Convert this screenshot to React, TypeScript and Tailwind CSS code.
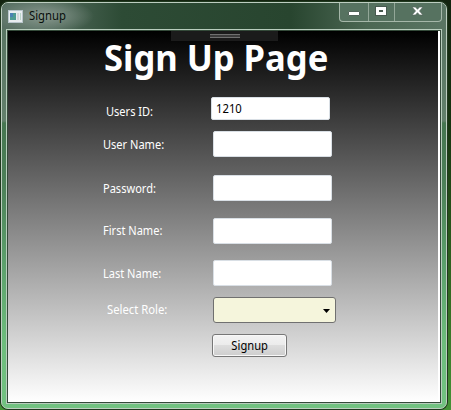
import React from "react";

type Field = { label: string; value: string; row: string; text: string; box: string };

const fields: Field[] = [
  { label: "Users ID:", value: "1210", row: "mt-[13px] h-[23px] pl-[98px]", text: "w-[105px] pt-[7px]", box: "w-[119px]" },
  { label: "User Name:", value: "", row: "mt-[11px] h-[26px] pl-[95px]", text: "w-[110px] pt-[6px]", box: "w-[119px]" },
  { label: "Password:", value: "", row: "mt-[18px] h-[26px] pl-[95px]", text: "w-[110px] pt-[6px]", box: "w-[119px]" },
  { label: "First Name:", value: "", row: "mt-[17px] h-[26px] pl-[95px]", text: "w-[110px] pt-[5px]", box: "w-[119px]" },
  { label: "Last Name:", value: "", row: "mt-[16px] h-[26px] pl-[95px]", text: "w-[110px] pt-[6px]", box: "w-[119px]" },
];

function TitleBar() {
  return (
    <div className="flex h-[26px] items-start justify-between">
      <div className="flex h-[26px] w-[110px] items-center bg-[radial-gradient(ellipse_50px_18px_at_42px_13px,#8a9a90_0%,#7d8f84b0_45%,#72877900_100%)] pl-[6px]">
        <svg width="15" height="13" viewBox="0 0 15 13" shapeRendering="crispEdges">
          <rect width="15" height="13" fill="#e9edf0" />
          <rect x="0.5" y="0.5" width="14" height="12" fill="none" stroke="#b9c6cc" />
          <rect x="2" y="3" width="6" height="7" fill="#4f9b93" />
          <rect x="2" y="3" width="3" height="4" fill="#4b82b4" />
          <rect x="9" y="3" width="2" height="7" fill="#d3d7da" />
          <rect x="12" y="3" width="1" height="7" fill="#b9d4c9" />
        </svg>
        <span className="ml-[6px] origin-left scale-x-[0.94] text-[12px] leading-[16px] text-[#080f0b]">Signup</span>
      </div>
      <div className="mr-[4px] flex h-[19px] w-[103px] rounded-b-[4px] border border-t-0 border-[#a5b7a9] bg-[#567260]">
        <div className="w-[29px] border-r border-[#93a798]">
          <svg width="28" height="18"><rect x="8.5" y="8.5" width="11" height="4" rx=".5" fill="#fff" stroke="#53645b" /></svg>
        </div>
        <div className="w-[26px] border-r border-[#93a798]">
          <svg width="25" height="18" shapeRendering="crispEdges"><rect x="6" y="3" width="12" height="10" fill="#485a50" /><path d="M7 4h10v8H7z M10 7v2h4V7z" fill="#fff" fillRule="evenodd" /></svg>
        </div>
        <div className="flex-1">
          <svg width="46" height="18"><path d="M17 4h3.5l2 2.3L24.500 4H28l-3.500 4 3.500 4h-3.500l-2-2.300-2 2.300H17l3.500-4z" fill="#fff" stroke="#53645b" strokeWidth=".7" /></svg>
        </div>
      </div>
    </div>
  );
}

export default function App() {
  return (
    <div className="h-[410px] w-[451px] overflow-hidden bg-[linear-gradient(#13230f_0%,#173411_30%,#366f24_75%,#449236_100%)] pl-px pt-[2px] font-['Noto_Sans','Open_Sans',sans-serif]">
      <div className="flex h-[407px] w-[446px] flex-col rounded-[7px] border border-[#bdcdc0] bg-[linear-gradient(#567260_0px,#62806b_118px,#457650_120px,#4c8058_180px,#5ba06b_260px,#6dbd7c_340px,#72c281_407px)] shadow-[0_0_0_1px_#20391f]">
        <div className="rounded-t-[6px] bg-[linear-gradient(90deg,#587063_0%,#587063_8%,#2d4b35_27%,#28452f_65%,#4b6753_82%,#5a7563_100%)]">
          <TitleBar />
        </div>
        <div className="ml-[4px] h-[375px] w-[436px] border border-[#b8cdbd]">
          <div className="h-[373px] w-[434px] border border-[#344a39] bg-white pr-[2px]">
            <main className="h-[371px] w-[430px] bg-[linear-gradient(#000_0%,#fff_100%)] text-[12px] leading-[16px] text-white">
              <div className="ml-[163px] flex h-[10px] w-[107px] justify-center bg-[#1b1b1b] pt-[3px]">
                <div className="h-[4px] w-[30px] border-y border-[#707070] bg-[#3b3b3b]" />
              </div>
              <h1 className="-mt-px ml-[96px] h-[44px] w-max origin-left scale-x-[0.96] whitespace-nowrap text-[36px] font-bold leading-[36px]">Sign Up Page</h1>
              {fields.map((f) => (
                <div key={f.label} className={`flex ${f.row}`}>
                  <label className={`shrink-0 ${f.text}`}><span className="inline-block origin-left scale-x-[0.92] whitespace-nowrap">{f.label}</span></label>
                  <div className={`flex items-center rounded-[2px] border border-[#d9dfe5] bg-white pl-[4px] text-black ${f.box}`}>
                    <span className="origin-left scale-x-[0.94]">{f.value}</span>
                  </div>
                </div>
              ))}
              <div className="mt-[11px] flex h-[26px] pl-[99px]">
                <label className="w-[106px] shrink-0 pt-[5px]"><span className="inline-block origin-left scale-x-[0.94] whitespace-nowrap">Select Role:</span></label>
                <div className="flex w-[123px] items-center justify-end rounded-[3px] border border-[#707070] bg-[#f5f5dc] pr-[5px] pt-px">
                  <svg width="7" height="4"><path d="M0 0h7L3.5 4z" fill="#000" /></svg>
                </div>
              </div>
              <button className="ml-[204px] mt-[11px] flex h-[23px] w-[75px] items-center justify-center rounded-[3px] border border-[#777] bg-[linear-gradient(#f3f3f3_0%,#ebebeb_50%,#dddddd_50%,#cdcdcd_100%)] text-black shadow-[inset_0_0_0_1px_#f8f8f8]">
                <span className="scale-x-[0.93]">Signup</span>
              </button>
            </main>
          </div>
        </div>
      </div>
    </div>
  );
}
